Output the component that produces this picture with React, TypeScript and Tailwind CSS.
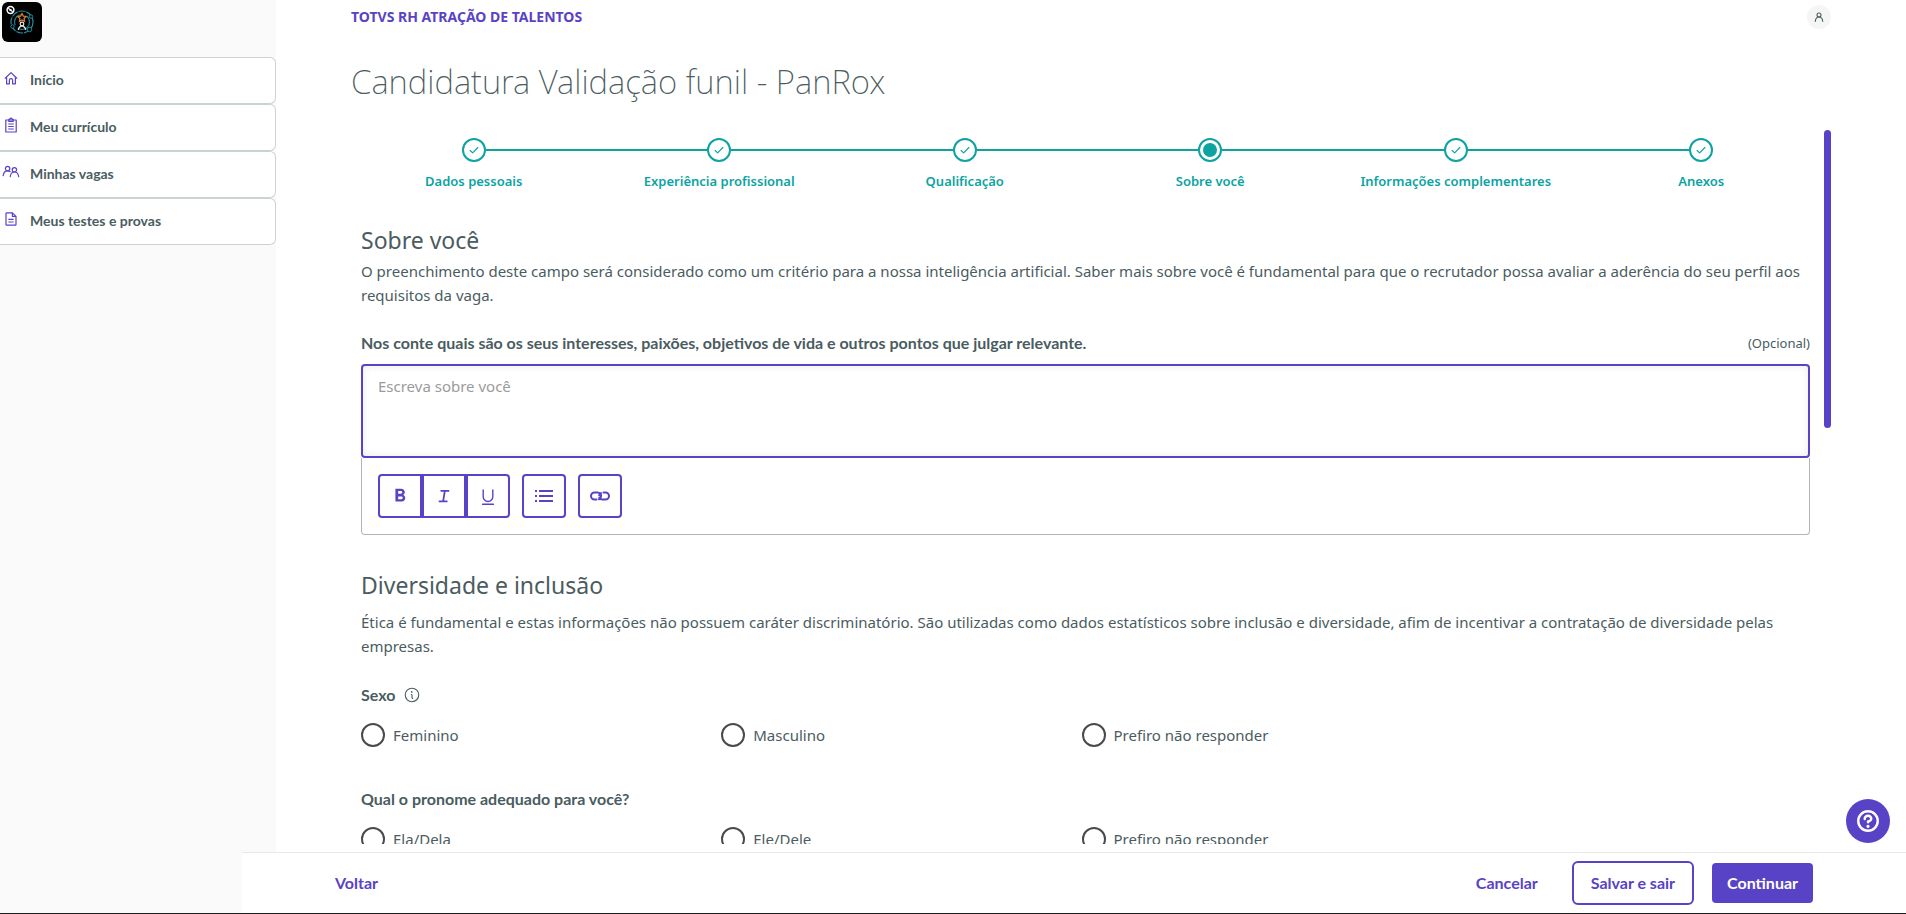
import React from "react";
import { PiTextUnderline, PiInfo, PiQuestionBold } from "react-icons/pi";
import { MdFormatBold } from "react-icons/md";

type SvgProps = { className?: string };

function HomeIcon({ className }: SvgProps) {
  return (
    <svg viewBox="0 0 16 16" className={className} fill="none" stroke="currentColor" strokeWidth="1.2" strokeLinecap="round" strokeLinejoin="round" aria-hidden="true">
      <path d="M2.2 8.2L8 2.600l5.800 5.600M3.600 7.400v6.400h2.800v-3.600a1.600 1.600 0 0 1 3.200 0v3.600h2.800V7.400" />
    </svg>
  );
}

function ClipboardIcon({ className }: SvgProps) {
  return (
    <svg viewBox="0 0 16 16" className={className} fill="none" stroke="currentColor" strokeWidth="1.200" strokeLinejoin="round" aria-hidden="true">
      <path d="M5.500 3H2.800v12h10.400V3h-2.700" />
      <path d="M5.800 2.400h1a1.200 1.200 0 0 1 2.400 0h1v2H5.800z" fill="currentColor" fillOpacity="0.5" />
      <path d="M5.200 7h5.600M5.200 9.500h5.600M5.200 12h5.600" />
    </svg>
  );
}

function FileIcon({ className }: SvgProps) {
  return (
    <svg viewBox="0 0 16 16" className={className} fill="none" stroke="currentColor" strokeWidth="1.200" strokeLinejoin="round" aria-hidden="true">
      <path d="M9.400 1.800H3.800a.8.8 0 0 0-.8.8v10.800a.8.8 0 0 0 .8.8h8.400a.8.8 0 0 0 .8-.8V5.400z" />
      <path d="M9.400 1.800v3.600H13M5.400 8.400h5.200M5.400 11h5.200" />
    </svg>
  );
}

function PersonIcon({ className }: SvgProps) {
  return (
    <svg viewBox="0 0 16 16" className={className} fill="none" stroke="currentColor" strokeWidth="1.7" strokeLinecap="round" aria-hidden="true">
      <circle cx="8" cy="4.800" r="3.200" />
      <path d="M2 15c.4-4 2.600-7 6-7s5.600 3 6 7" />
    </svg>
  );
}

function PeopleIcon({ className }: SvgProps) {
  return (
    <svg viewBox="0 0 18 14" className={className} fill="none" stroke="currentColor" strokeWidth="1.2" strokeLinecap="round" aria-hidden="true">
      <circle cx="5.600" cy="3.600" r="2.200" />
      <path d="M1.200 10.600c.3-2.800 1.700-4.800 4.400-4.800 1 0 1.900.3 2.600.9" />
      <circle cx="12.400" cy="4.800" r="2.200" />
      <path d="M8.200 11.600c.4-2.800 1.700-4.600 4.200-4.600s3.900 1.800 4.300 4.600" />
    </svg>
  );
}

function ItalicIcon({ className }: SvgProps) {
  return (
    <svg viewBox="0 0 16 16" className={className} fill="none" stroke="currentColor" strokeWidth="2" aria-hidden="true">
      <path d="M4 2h10M2 14h10M9 2L7 14" />
    </svg>
  );
}

function ListIcon({ className }: SvgProps) {
  return (
    <svg viewBox="0 0 20 16" className={className} fill="none" stroke="currentColor" strokeWidth="1.8" aria-hidden="true">
      <path d="M5 3h14M5 8h14M5 13h14M1 3h2M1 8h2M1 13h2" />
    </svg>
  );
}

function ChainIcon({ className }: SvgProps) {
  return (
    <svg viewBox="0 0 22 12" className={className} fill="none" stroke="currentColor" strokeWidth="2" strokeLinecap="round" aria-hidden="true">
      <path d="M7.500 9.500H5.500a3.500 3.500 0 0 1 0-7h3c2.600 0 4 2 3.500 4.200-.2 1.200-1 2.200-2 2.600" />
      <path d="M14.500 2.500h2a3.500 3.500 0 0 1 0 7h-3c-1.400 0-2.600-.8-3.200-1.800M10.200 5.400c.3-1 .8-1.800 1.800-2.400" />
    </svg>
  );
}

function CheckIcon({ className }: SvgProps) {
  return (
    <svg viewBox="0 0 12 12" className={className} fill="none" stroke="currentColor" strokeWidth="1.4" strokeLinecap="round" strokeLinejoin="round" aria-hidden="true">
      <path d="M1.400 6.600l3 2.800 6.200-6.400" />
    </svg>
  );
}

function Logo() {
  return (
    <svg viewBox="0 0 40 40" className="size-10" role="img" aria-label="Logo">
      <rect width="40" height="40" rx="6" fill="#000" />
      <g fill="none">
        <circle cx="20" cy="20" r="11" stroke="#1f8f9c" strokeWidth="1.2" strokeDasharray="7 1" />
        <circle cx="20" cy="20" r="7.5" stroke="#1b7d8a" strokeWidth="1.2" strokeDasharray="15 5" />
        <circle cx="10.5" cy="24.5" r="1.7" fill="#000" stroke="#1f8f9c" />
        <circle cx="29" cy="14.5" r="1.7" fill="#000" stroke="#1f8f9c" />
        <circle cx="27.5" cy="27.5" r="2.2" fill="#000" stroke="#1f8f9c" />
        <path d="M20 11.5l1.300 2.600 2.900.4-2.100 2 .5 2.900-2.600-1.400-2.600 1.400.5-2.900-2.100-2 2.900-.4z" fill="#000" stroke="#d9822b" strokeWidth="1.2" />
        <circle cx="20" cy="22" r="1.8" stroke="#e5e5e5" strokeWidth="1.2" />
        <path d="M16.500 28v-1.500l2.200-2.500h2.600l2.200 2.500V28" stroke="#e5e5e5" strokeWidth="1.3" />
        <circle cx="8.500" cy="8" r="3.400" stroke="#fff" strokeWidth="1.5" />
        <path d="M6.300 6.200l4.400 3.600M7.600 8.900l1.800-1.800" stroke="#fff" strokeWidth="1.2" />
      </g>
    </svg>
  );
}

const menu = [
  { label: "Início", icon: <HomeIcon className="size-4" /> },
  { label: "Meu currículo", icon: <ClipboardIcon className="size-4" /> },
  { label: "Minhas vagas", icon: <PeopleIcon className="h-4 w-[18px]" /> },
  { label: "Meus testes e provas", icon: <FileIcon className="size-4" /> },
];

const steps = ["Dados pessoais", "Experiência profissional", "Qualificação", "Sobre você", "Informações complementares", "Anexos"];
const current = 3;

function Stepper() {
  return (
    <ol className="flex pt-2 text-[#0ca3a1]">
      {steps.map((step, i) => (
        <li key={step} className="flex flex-1 flex-col items-center" aria-current={i === current ? "step" : undefined}>
          <div className="flex w-full items-center">
            <span className={i === 0 ? "h-0.5 flex-1" : "h-0.5 flex-1 bg-[#0ca3a1]"} />
            <span className="flex size-6 items-center justify-center rounded-full border-2 border-[#0ca3a1]">
              {i === current ? <span className="size-3.5 rounded-full bg-[#0ca3a1]" /> : <CheckIcon className="size-2.5" />}
            </span>
            <span className={i === steps.length - 1 ? "h-0.5 flex-1" : "h-0.5 flex-1 bg-[#0ca3a1]"} />
          </div>
          <span className="mt-[9px] text-[13px] leading-5 font-semibold">{step}</span>
        </li>
      ))}
    </ol>
  );
}

function RadioGroup({ name, legend, options, info }: { name: string; legend: string; options: string[]; info?: boolean }) {
  return (
    <fieldset>
      <legend className="flex items-center gap-2 font-[Lato,sans-serif] text-base leading-6 font-bold">
        {legend}
        {info && <PiInfo className="size-[18px]" />}
      </legend>
      <div className="mt-4 grid grid-cols-4 pr-2">
        {options.map((option) => (
          <label key={option} className="flex items-center gap-2 leading-6">
            <input type="radio" name={name} className="size-6 appearance-none rounded-full border-2 border-[#4a4a4a] bg-white checked:border-8 checked:border-[#5843c6]" />
            {option}
          </label>
        ))}
      </div>
    </fieldset>
  );
}

const toolButton = "flex size-11 items-center justify-center border-2 border-[#5843c6] bg-white";

export default function App() {
  return (
    <div className="flex h-screen border-b border-[#1c1c1c] bg-white font-['Noto_Sans',sans-serif] text-[15px] text-[#4a5c60]">
      <aside className="w-[276px] shrink-0 bg-[#fafafa]">
        <div className="px-0.5 pt-0.5 pb-[15px]">
          <Logo />
        </div>
        <nav>
          <ul>
            {menu.map((item) => (
              <li key={item.label}>
                <a href="#" className="flex h-[47px] items-center rounded-r-md border border-l-0 border-[#cbd2d2] bg-white pb-px font-[Lato,sans-serif] text-sm font-bold">
                  <span className="flex w-[30px] justify-center pr-2 pb-1 text-[#5843c6]">{item.icon}</span>
                  {item.label}
                </a>
              </li>
            ))}
          </ul>
        </nav>
      </aside>

      <div className="flex min-w-0 flex-1 flex-col">
        <header className="flex h-[34px] shrink-0 items-center justify-between px-[75px]">
          <span className="text-sm font-bold text-[#5843c6]">TOTVS RH ATRAÇÃO DE TALENTOS</span>
          <button type="button" aria-label="Perfil" className="flex size-6 items-center justify-center rounded-full bg-[#f5f5f5]">
            <PersonIcon className="size-2.5" />
          </button>
        </header>
        <h1 className="shrink-0 px-[75px] py-7 text-[33px] leading-10 font-extralight">Candidatura Validação funil - PanRox</h1>

        <div className="flex min-h-0 flex-1 px-[75px]">
          <main className="min-w-0 flex-1 overflow-y-auto [scrollbar-width:none]">
            <Stepper />
            <form className="pr-3.5 pb-6 pl-2.5">
              <h2 className="mt-8 text-[23px] leading-[34px]">Sobre você</h2>
              <p className="mt-0.5 leading-6">
                O preenchimento deste campo será considerado como um critério para a nossa inteligência artificial. Saber mais sobre você é fundamental para que o recrutador possa avaliar a aderência do seu perfil aos requisitos da vaga.
              </p>

              <div className="mt-6 flex items-center justify-between leading-6">
                <label htmlFor="about" className="font-[Lato,sans-serif] text-base leading-6 font-bold">
                  Nos conte quais são os seus interesses, paixões, objetivos de vida e outros pontos que julgar relevante.
                </label>
                <span className="text-[13px]">(Opcional)</span>
              </div>
              <textarea
                id="about"
                placeholder="Escreva sobre você"
                className="mt-[9px] block h-[94px] w-full resize-none rounded border-2 border-[#5843c6] px-[15px] py-2 leading-6 shadow-[inset_0_0_8px_rgba(0,0,0,0.08)] outline-none placeholder:text-[#9b9b9b]"
              />
              <div className="flex gap-3 rounded-b border border-t-0 border-[#b1b5b5] p-4 text-[#5843c6]">
                <div className="flex">
                  <button type="button" aria-label="Negrito" className={`${toolButton} rounded-l`}><MdFormatBold className="size-[22px]" /></button>
                  <button type="button" aria-label="Itálico" className={toolButton}><ItalicIcon className="size-3.5" /></button>
                  <button type="button" aria-label="Sublinhado" className={`${toolButton} rounded-r`}><PiTextUnderline className="size-[22px]" /></button>
                </div>
                <button type="button" aria-label="Lista" className={`${toolButton} rounded`}><ListIcon className="h-4 w-5" /></button>
                <button type="button" aria-label="Link" className={`${toolButton} rounded`}><ChainIcon className="h-3 w-[22px]" /></button>
              </div>

              <h2 className="mt-[34px] text-[23px] leading-8">Diversidade e inclusão</h2>
              <p className="mt-[9px] mb-[25px] leading-6">
                Ética é fundamental e estas informações não possuem caráter discriminatório. São utilizadas como dados estatísticos sobre inclusão e diversidade, afim de incentivar a contratação de diversidade pelas empresas.
              </p>
              <div className="flex flex-col gap-10">
                <RadioGroup name="sexo" legend="Sexo" info options={["Feminino", "Masculino", "Prefiro não responder"]} />
                <RadioGroup name="pronome" legend="Qual o pronome adequado para você?" options={["Ela/Dela", "Ele/Dele", "Prefiro não responder"]} />
              </div>
            </form>
          </main>
          <div className="w-[7px] shrink-0" aria-hidden="true">
            <div className="h-5/12 rounded-full bg-[#5843c6]" />
          </div>
        </div>

        <footer className="mt-2 -ml-[34px] flex h-[61px] shrink-0 items-center justify-between border-t border-[#e8e8e8] bg-white px-[93px] font-[Lato,sans-serif] text-base font-bold text-[#5843c6]">
          <button type="button">Voltar</button>
          <div className="flex items-center">
            <button type="button" className="mr-[34px]">Cancelar</button>
            <button type="button" className="mr-[18px] h-11 rounded-md border-2 border-[#5843c6] px-[17px]">Salvar e sair</button>
            <button type="button" className="h-10 rounded bg-[#5843c6] px-[15px] text-white">Continuar</button>
          </div>
        </footer>
      </div>

      <button type="button" aria-label="Ajuda" className="fixed right-4 bottom-[71px] flex size-11 items-center justify-center rounded-full bg-[#5843c6] text-white">
        <PiQuestionBold className="size-[26px]" />
      </button>
    </div>
  );
}
